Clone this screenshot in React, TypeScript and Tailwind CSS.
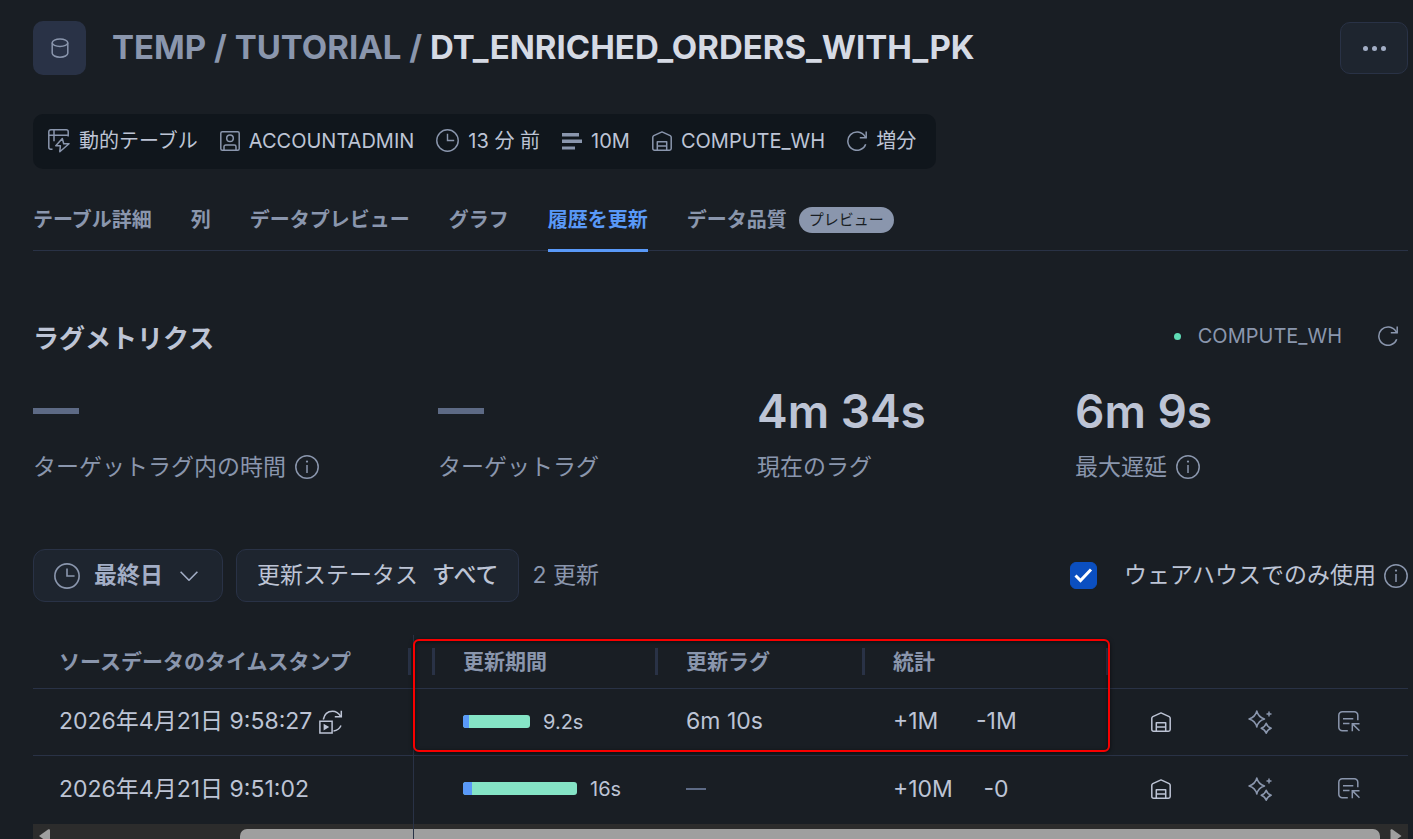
import React, { useState } from 'react';

interface IconProps {
  className?: string;
}

interface Metric {
  label: string;
  value: string | null;
  info?: boolean;
}

interface RefreshRow {
  id: string;
  timestamp: string;
  reinitialized?: boolean;
  queuedWidth: number;
  totalWidth: number;
  duration: string;
  lag: string | null;
  inserted: string;
  deleted: string;
}

const tabs: string[] = ['テーブル詳細', '列', 'データプレビュー', 'グラフ', '履歴を更新', 'データ品質'];

const metrics: Metric[] = [
  { label: 'ターゲットラグ内の時間', value: null, info: true },
  { label: 'ターゲットラグ', value: null },
  { label: '現在のラグ', value: '4m 34s' },
  { label: '最大遅延', value: '6m 9s', info: true },
];

const rows: RefreshRow[] = [
  {
    id: 'r1',
    timestamp: '2026年4月21日 9:58:27',
    reinitialized: true,
    queuedWidth: 6,
    totalWidth: 67,
    duration: '9.2s',
    lag: '6m 10s',
    inserted: '+1M',
    deleted: '-1M',
  },
  {
    id: 'r2',
    timestamp: '2026年4月21日 9:51:02',
    queuedWidth: 9,
    totalWidth: 114,
    duration: '16s',
    lag: null,
    inserted: '+10M',
    deleted: '-0',
  },
];

const DatabaseIcon: React.FC<IconProps> = ({ className }) => (
  <svg viewBox="0 0 18 20" className={className} fill="none" stroke="currentColor" strokeWidth="1.5">
    <ellipse cx="9" cy="4.7" rx="7.8" ry="3.7" />
    <path d="M1.2 4.7v10.6c0 2 3.5 3.9 7.8 3.9s7.8-1.9 7.8-3.9V4.7" />
  </svg>
);

const DynamicTableIcon: React.FC<IconProps> = ({ className }) => (
  <svg viewBox="0 0 22 24" className={className} fill="none" stroke="currentColor" strokeWidth="1.5">
    <path d="M4.5 20.2H2.8a2 2 0 0 1-2-2V2.8a2 2 0 0 1 2-2h15.4a2 2 0 0 1 2 2v4.7M.8 6.3h19.4M6 .8v11.4" />
    <path d="M14.3 9.5 7.8 16.7h4.6l-.6 6 9.2-8h-5.3z" strokeLinejoin="round" />
  </svg>
);

const RoleIcon: React.FC<IconProps> = ({ className }) => (
  <svg viewBox="0 0 20 20" className={className} fill="none" stroke="currentColor" strokeWidth="1.5">
    <rect x=".8" y=".8" width="18.4" height="18.4" rx="1.5" />
    <circle cx="10" cy="7.3" r="3.3" />
    <path d="M4 19v-3.2c0-1 .8-1.7 1.7-1.7h8.6c.9 0 1.7.7 1.7 1.7V19" />
  </svg>
);

const ClockIcon: React.FC<IconProps> = ({ className }) => (
  <svg viewBox="0 0 24 24" className={className} fill="none" stroke="currentColor" strokeWidth="1.5">
    <circle cx="12" cy="12" r="11.2" />
    <path d="M12 5v7h7" />
  </svg>
);

const RowsIcon: React.FC<IconProps> = ({ className }) => (
  <svg viewBox="0 0 20 18" className={className} fill="currentColor">
    <path d="M0 1h17v3.4H0zM0 7.6h20V11H0zM0 14.4h13v3H0z" />
  </svg>
);

const WarehouseIcon: React.FC<IconProps> = ({ className }) => (
  <svg viewBox="0 0 20 20" className={className} fill="none" stroke="currentColor" strokeWidth="1.5" strokeLinejoin="round">
    <path d="M.8 17.5V6.2c0-.7.4-1.3 1-1.6L10 .9l8.2 3.7c.6.3 1 .9 1 1.6v11.3c0 1-.8 1.7-1.7 1.7h-15c-1 0-1.700-.8-1.700-1.700z" />
    <path d="M5.3 19v-8.3h9.400V19M5.300 14.900h9.400" />
  </svg>
);

const RefreshIcon: React.FC<IconProps> = ({ className }) => (
  <svg viewBox="0 0 20 20" className={className} fill="none" stroke="currentColor" strokeWidth="1.5">
    <path d="M18.7 13.2A9.200 9.200 0 1 1 17.800 5.200L19.200 6.600" />
    <path d="M19.200.4v6.300h-6.400" />
  </svg>
);

const InfoIcon: React.FC<IconProps> = ({ className }) => (
  <svg viewBox="0 0 24 24" className={className} fill="none" stroke="currentColor" strokeWidth="1.5">
    <circle cx="12" cy="12" r="11.2" />
    <path d="M12 10v8" />
    <circle cx="12" cy="6.6" r="1.1" fill="currentColor" stroke="none" />
  </svg>
);

const ChevronIcon: React.FC<IconProps> = ({ className }) => (
  <svg viewBox="0 0 18 10" className={className} fill="none" stroke="currentColor" strokeWidth="1.6">
    <path d="m.6.8 8.4 8.4L17.4.8" />
  </svg>
);

const ReinitializeIcon: React.FC<IconProps> = ({ className }) => (
  <svg viewBox="0 0 24 24" className={className} fill="none" stroke="currentColor" strokeWidth="1.5">
    <path d="M4.3 9.5C5.3 4.3 9 1.3 13.5 1.3c3.7 0 6.5 2.2 8.3 5.2" />
    <path d="M22.3.8v6h-6.5M22 15.5c-1.3 3-4 5-7.5 5.4" />
    <path d="M.9 11.3h12.2v11.8H.9z" />
    <path d="M4.6 13.8v6.600l5.600-3.300z" fill="currentColor" stroke="none" />
  </svg>
);

const SparkleIcon: React.FC<IconProps> = ({ className }) => (
  <svg viewBox="0 0 24 24" className={className} fill="none" stroke="currentColor" strokeWidth="1.5" strokeLinejoin="round">
    <path d="M8.8 1C9.800 5.300 12 7.700 16.500 9c-4.500 1.300-6.700 3.700-7.700 8C7.800 12.700 5.500 10.300 1 9 5.500 7.700 7.800 5.300 8.800 1z" />
    <path d="M18.2 13.2c.9 2.700 2.200 4.100 5 5-2.800.9-4.100 2.300-5 5-.9-2.700-2.200-4.100-5-5 2.800-.9 4.100-2.300 5-5z" />
    <path d="M21 1.500v5M18.500 4h5" />
  </svg>
);

const QueryIcon: React.FC<IconProps> = ({ className }) => (
  <svg viewBox="0 0 22 21" className={className} fill="none" stroke="currentColor" strokeWidth="1.5">
    <path d="M9.8 19.7H4.3a3.500 3.500 0 0 1-3.500-3.500V4.300A3.500 3.500 0 0 1 4.300.8h12a3.500 3.500 0 0 1 3.500 3.500v5" />
    <path d="M5 7.800h10.300M5 12.600h6.500M21.500 12.700h-7.200v7.500M14.500 12.900l7 6.900" />
  </svg>
);

const ResizeHandle: React.FC = () => <span className="h-[27px] w-[3px] shrink-0 bg-[#293246]" />;

const ContextBar: React.FC = () => {
  const items = [
    { icon: <DynamicTableIcon className="h-6 w-[22px]" />, text: '動的テーブル' },
    { icon: <RoleIcon className="size-5" />, text: 'ACCOUNTADMIN' },
    { icon: <ClockIcon className="size-[23px]" />, text: '13 分 前' },
    { icon: <RowsIcon className="h-[18px] w-5" />, text: '10M' },
    { icon: <WarehouseIcon className="size-5" />, text: 'COMPUTE_WH' },
    { icon: <RefreshIcon className="size-5" />, text: '増分' },
  ];

  return (
    <ul className="mt-[39px] flex h-[55px] w-fit items-center gap-[22px] rounded-[10px] bg-[#10161c] pr-5 pb-[2px] pl-[15px] text-xl whitespace-nowrap text-[#bdc4d5]">
      {items.map((item) => (
        <li key={item.text} className="flex items-center gap-[9px]">
          <span className="text-[#8a96ad]">{item.icon}</span>
          {item.text}
        </li>
      ))}
    </ul>
  );
};

const RefreshTable: React.FC = () => (
  <div className="relative mt-[33px]">
    <table className="w-full table-fixed border-collapse text-left whitespace-nowrap">
      <colgroup>
        <col className="w-[380px]" />
        <col className="w-[22px]" />
        <col className="w-[223px]" />
        <col className="w-[207px]" />
        <col className="w-[244px]" />
        <col className="w-[104px]" />
        <col className="w-[94px]" />
        <col />
      </colgroup>
      <thead>
        <tr className="h-[53px] border-b border-[#293246] text-[21px] text-[#8a96ad]">
          <th className="border-r border-[#293246] p-0">
            <div className="flex items-center justify-between pr-[2px] pl-[26px]">
              ソースデータのタイムスタンプ
              <ResizeHandle />
            </div>
          </th>
          <th className="p-0">
            <div className="flex justify-end">
              <ResizeHandle />
            </div>
          </th>
          {['更新期間', '更新ラグ', '統計'].map((title) => (
            <th key={title} className="p-0">
              <div className="flex items-center justify-between pl-7">
                {title}
                <ResizeHandle />
              </div>
            </th>
          ))}
          <td colSpan={3} />
        </tr>
      </thead>
      <tbody className="text-[23px] text-[#bdc4d5]">
        {rows.map((row) => (
          <tr key={row.id} className="h-[67px] border-b border-[#293246] last:border-b-0">
            <td className="border-r border-[#293246] p-0">
              <div className="flex items-center gap-[7px] pl-[26px]">
                {row.timestamp}
                {row.reinitialized && <ReinitializeIcon className="size-6" />}
              </div>
            </td>
            <td />
            <td className="p-0">
              <div className="flex items-center gap-[13px] pl-7 text-xl">
                <div className="flex h-[13px] overflow-hidden rounded-[3px] bg-[#85e4c6]" style={{ width: row.totalWidth }}>
                  <div className="bg-[#5999f8]" style={{ width: row.queuedWidth }} />
                </div>
                {row.duration}
              </div>
            </td>
            <td className="p-0 pl-7">{row.lag ?? <div className="h-[2px] w-5 bg-[#5d6a85]" />}</td>
            <td className="p-0">
              <div className="flex pl-7">
                <span className="w-[83px]">{row.inserted}</span>
                <span className="w-10 text-center">{row.deleted}</span>
              </div>
            </td>
            <td className="p-0">
              <button type="button" aria-label="ウェアハウス" className="mx-auto block">
                <WarehouseIcon className="size-5" />
              </button>
            </td>
            <td className="p-0">
              <button type="button" aria-label="AI" className="mx-auto block text-[#8a96ad]">
                <SparkleIcon className="size-6" />
              </button>
            </td>
            <td className="p-0 pl-[31px]">
              <button type="button" aria-label="クエリ" className="block text-[#8a96ad]">
                <QueryIcon className="h-[21px] w-[22px]" />
              </button>
            </td>
          </tr>
        ))}
      </tbody>
    </table>

    {/* Horizontal scrollbar */}
    <div className="mt-[2px] flex h-[15px] overflow-hidden bg-[#2c2c2c] pt-[5px] text-[#9f9f9f]">
      <svg viewBox="0 0 12 14" className="ml-[6px] h-[14px] w-3 shrink-0" fill="currentColor">
        <path d="M0 7 9 .6c1-.7 2-.5 2 .6v11.6c0 1-1 1.300-2 .6z" />
      </svg>
      <div className="mr-[10px] ml-[189px] h-[15px] flex-1 rounded-t-[7px] bg-[#9f9f9f]" />
      <svg viewBox="0 0 12 14" className="mr-[6px] h-[14px] w-3 shrink-0" fill="currentColor">
        <path d="M11.500 7 2.500.6C1.500-.1.500.1.500 1.200v11.600c0 1 1 1.300 2 .6z" />
      </svg>
    </div>
    <div className="absolute bottom-0 left-[380px] h-[17px] w-px bg-[#293246]" />

    {/* Highlight around the refresh stats */}
    <div className="pointer-events-none absolute top-1 left-[380px] h-[113px] w-[697px] rounded-[6px] border-2 border-[#f80000] shadow-[0_1px_4px_rgba(0,0,0,0.6),inset_0_1px_4px_rgba(0,0,0,0.5)]" />
  </div>
);

const App: React.FC = () => {
  const [activeTab, setActiveTab] = useState('履歴を更新');
  const [warehouseOnly, setWarehouseOnly] = useState(true);

  return (
    <main
      lang="ja"
      className="min-h-screen overflow-hidden bg-[#191e24] pt-[21px] pr-[5px] pl-[33px] font-['Inter','Noto_Sans_CJK_JP',sans-serif] text-[#bdc4d5]"
    >
      {/* Header */}
      <header className="flex items-center">
        <div className="flex h-[54px] w-[53px] shrink-0 items-center justify-center rounded-[10px] bg-[#293246] text-[#8a96ad]">
          <DatabaseIcon className="h-5 w-[18px]" />
        </div>
        <h1 className="ml-[26px] flex-1 text-[33px] font-bold whitespace-nowrap text-[#d5dae4]">
          <span className="text-[#8a96ad]">TEMP / TUTORIAL / </span>
          DT_ENRICHED_ORDERS_WITH_PK
        </h1>
        <button
          type="button"
          aria-label="その他"
          className="flex h-[52px] w-[68px] items-center justify-center gap-1 rounded-[10px] border border-[#293246] bg-[#1e252f]"
        >
          <span className="size-[5px] rounded-full bg-[#a3aec6]" />
          <span className="size-[5px] rounded-full bg-[#a3aec6]" />
          <span className="size-[5px] rounded-full bg-[#a3aec6]" />
        </button>
      </header>

      <ContextBar />

      {/* Tabs */}
      <nav className="mt-[37px] flex items-end gap-[39px] border-b border-[#293246] text-xl leading-7 font-bold whitespace-nowrap">
        {tabs.map((tab) => (
          <button
            key={tab}
            type="button"
            onClick={() => setActiveTab(tab)}
            className={`-mb-[2px] flex items-center border-b-[3px] pb-[15px] ${
              tab === activeTab ? 'border-[#5999f8] text-[#5999f8]' : 'border-transparent text-[#8a96ad]'
            }`}
          >
            {tab}
            {tab === 'データ品質' && (
              <span className="ml-3 flex h-[26px] items-center rounded-full bg-[#8a96ad] px-[10px] text-[15px] font-normal text-[#191e24]">
                プレビュー
              </span>
            )}
          </button>
        ))}
      </nav>

      {/* Lag metrics */}
      <section>
        <div className="mt-[67px] flex items-start justify-between">
          <h2 className="pt-px text-[26px] leading-10 font-bold">ラグメトリクス</h2>
          <div className="flex items-center pr-[10px] text-xl leading-9 text-[#8a96ad]">
            <span className="mr-[17px] size-[7px] rounded-full bg-[#5fdcb5]" />
            COMPUTE_WH
            <button type="button" aria-label="更新" className="ml-9">
              <RefreshIcon className="size-5" />
            </button>
          </div>
        </div>
        <dl className="mt-6 grid grid-cols-[405fr_319fr_318fr_333fr]">
          {metrics.map((metric) => (
            <div key={metric.label} className="flex flex-col-reverse">
              <dt className="mt-[10px] flex items-center gap-[9px] text-[23px] leading-9 text-[#8a96ad]">
                {metric.label}
                {metric.info && <InfoIcon className="size-6" />}
              </dt>
              <dd className="flex h-[56px] items-center text-[46px] font-semibold">
                {metric.value ?? <span className="h-[6px] w-[46px] bg-[#5d6a85]" />}
              </dd>
            </div>
          ))}
        </dl>
      </section>

      {/* Filters */}
      <div className="mt-16 flex items-center text-[23px] whitespace-nowrap">
        <button
          type="button"
          className="flex h-[53px] items-center rounded-xl border border-[#293246] bg-[#1e252f] px-5 font-bold text-[#a3aec6]"
        >
          <ClockIcon className="mr-[14px] size-[26px] text-[#8a96ad]" />
          最終日
          <ChevronIcon className="mr-1 ml-[17px] h-[10px] w-[18px]" />
        </button>
        <button
          type="button"
          className="ml-[13px] flex h-[53px] items-center gap-[14px] rounded-[10px] border border-[#293246] bg-[#1e252f] px-5"
        >
          <span>更新ステータス</span>
          <span className="font-medium">すべて</span>
        </button>
        <span className="ml-[13px] text-[#8a96ad]">2 更新</span>
        <label className="ml-auto flex items-center">
          <span className="relative mr-[27px] flex size-[27px]">
            <input
              type="checkbox"
              checked={warehouseOnly}
              onChange={(e) => setWarehouseOnly(e.target.checked)}
              className="size-[27px] appearance-none rounded-md border border-[#293246] checked:border-[#0b4fc0] checked:bg-[#0b4fc0]"
            />
            {warehouseOnly && (
              <svg viewBox="0 0 27 27" className="pointer-events-none absolute inset-0" fill="none" stroke="#fff" strokeWidth="3">
                <path d="m5.500 13.500 5 5L21 7.500" />
              </svg>
            )}
          </span>
          ウェアハウスでのみ使用
        </label>
        <InfoIcon className="ml-2 size-6 text-[#8a96ad]" />
      </div>

      <RefreshTable />
    </main>
  );
};

export default App;
